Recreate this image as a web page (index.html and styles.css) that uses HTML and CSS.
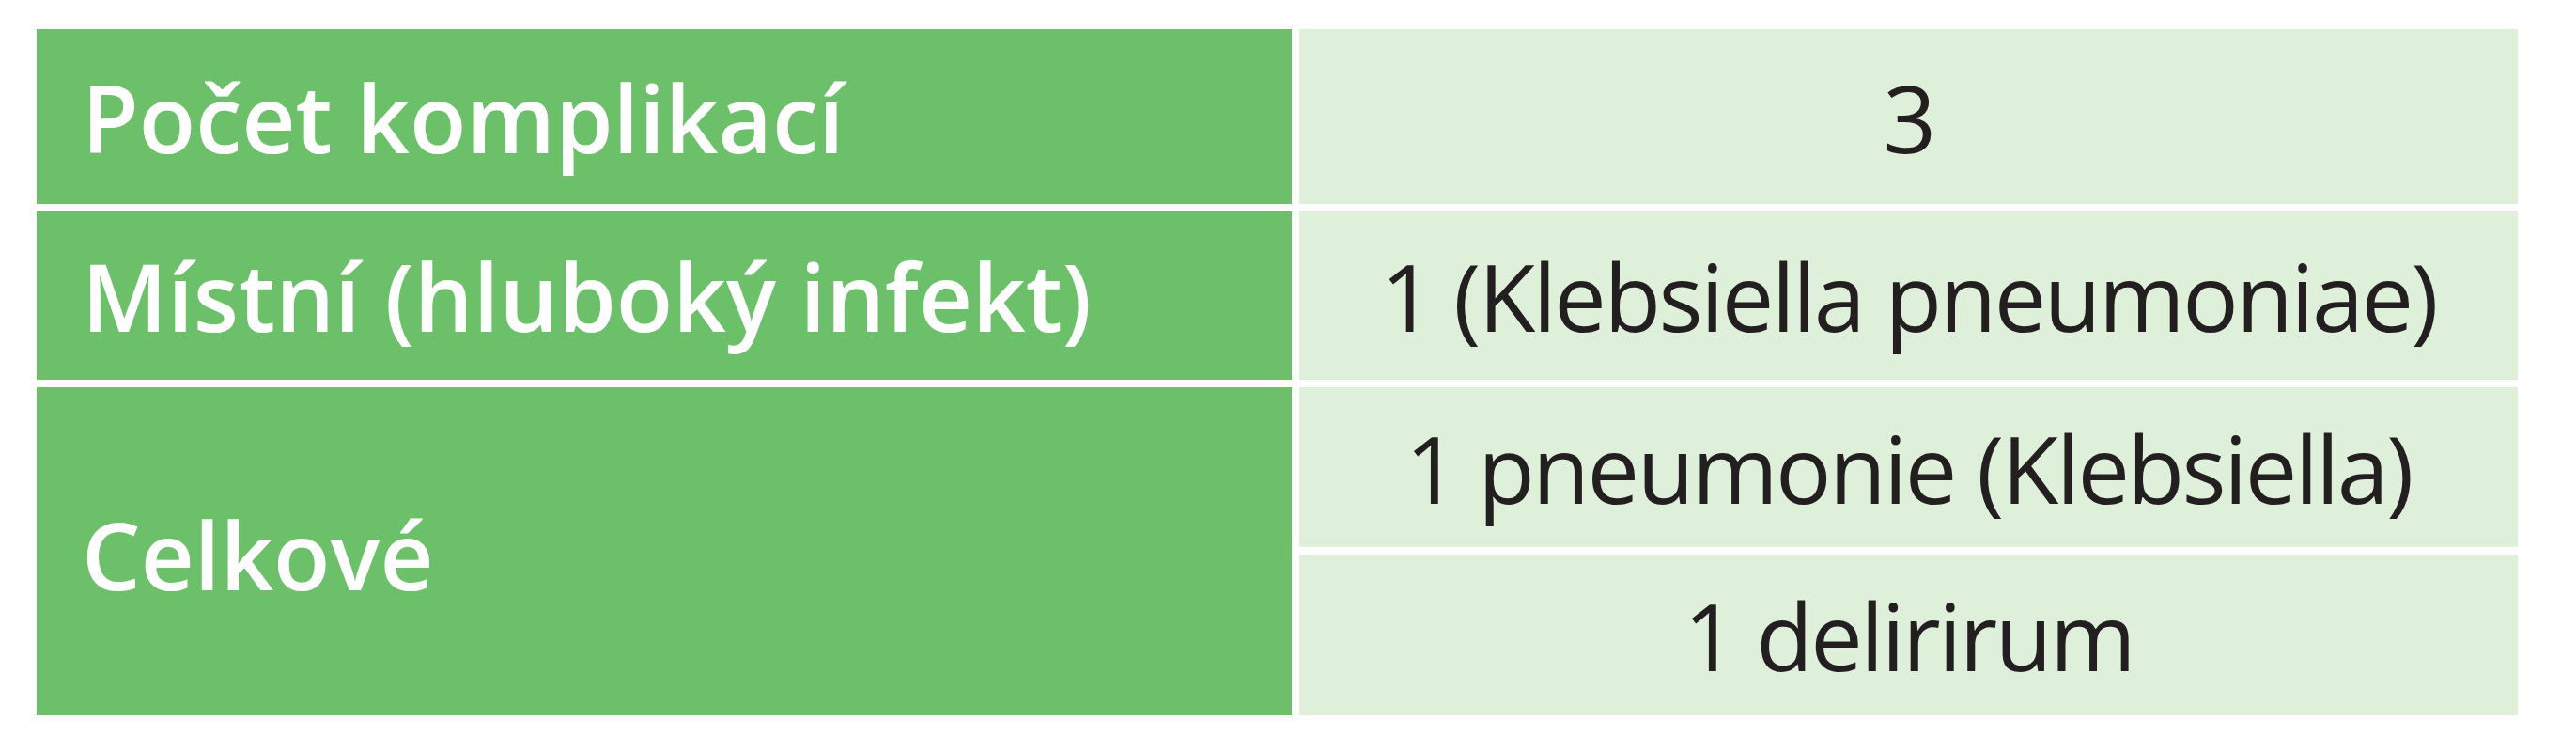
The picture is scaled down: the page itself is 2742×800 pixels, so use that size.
FILE: index.html
```html
<!DOCTYPE html>
<html lang="cs">
<head>
<meta charset="utf-8">
<title>Komplikace</title>
<link rel="stylesheet" href="styles.css">
</head>
<body>
<div class="table">
  <div class="cell head r1">Počet komplikací</div>
  <div class="cell val r1">3</div>
  <div class="cell head r2">Místní (hluboký infekt)</div>
  <div class="cell val r2">1 (Klebsiella pneumoniae)</div>
  <div class="cell head r3">Celkové</div>
  <div class="cell val r3a">1 pneumonie (Klebsiella)</div>
  <div class="cell val r3b">1 delirirum</div>
</div>
</body>
</html>
```
FILE: styles.css
```css
html, body {
  margin: 0;
  padding: 0;
  background: #ffffff;
}

body {
  padding: 31px 0 0 39px;
  font-family: "Open Sans", "Noto Sans", "DejaVu Sans", sans-serif;
}

.table {
  display: grid;
  grid-template-columns: 1336px 1297px;
  grid-template-rows: 186px 179px 170px 171px;
  gap: 8px;
  width: 2641px;
}

.cell {
  display: flex;
  align-items: center;
  font-size: 99px;
  line-height: 1;
  white-space: nowrap;
}

.head {
  background: #6cc06a;
  color: #ffffff;
  font-weight: 600;
  padding-left: 48px;
}

.val {
  background: #dff0da;
  color: #231f20;
  font-weight: 400;
  letter-spacing: -2.5px;
  justify-content: center;
}

.r1 { grid-row: 1; }
.r2 { grid-row: 2; }
.head.r3 { grid-row: 3 / span 2; padding-top: 6px; }
.r3a { grid-row: 3; }
.r3b { grid-row: 4; }
```
